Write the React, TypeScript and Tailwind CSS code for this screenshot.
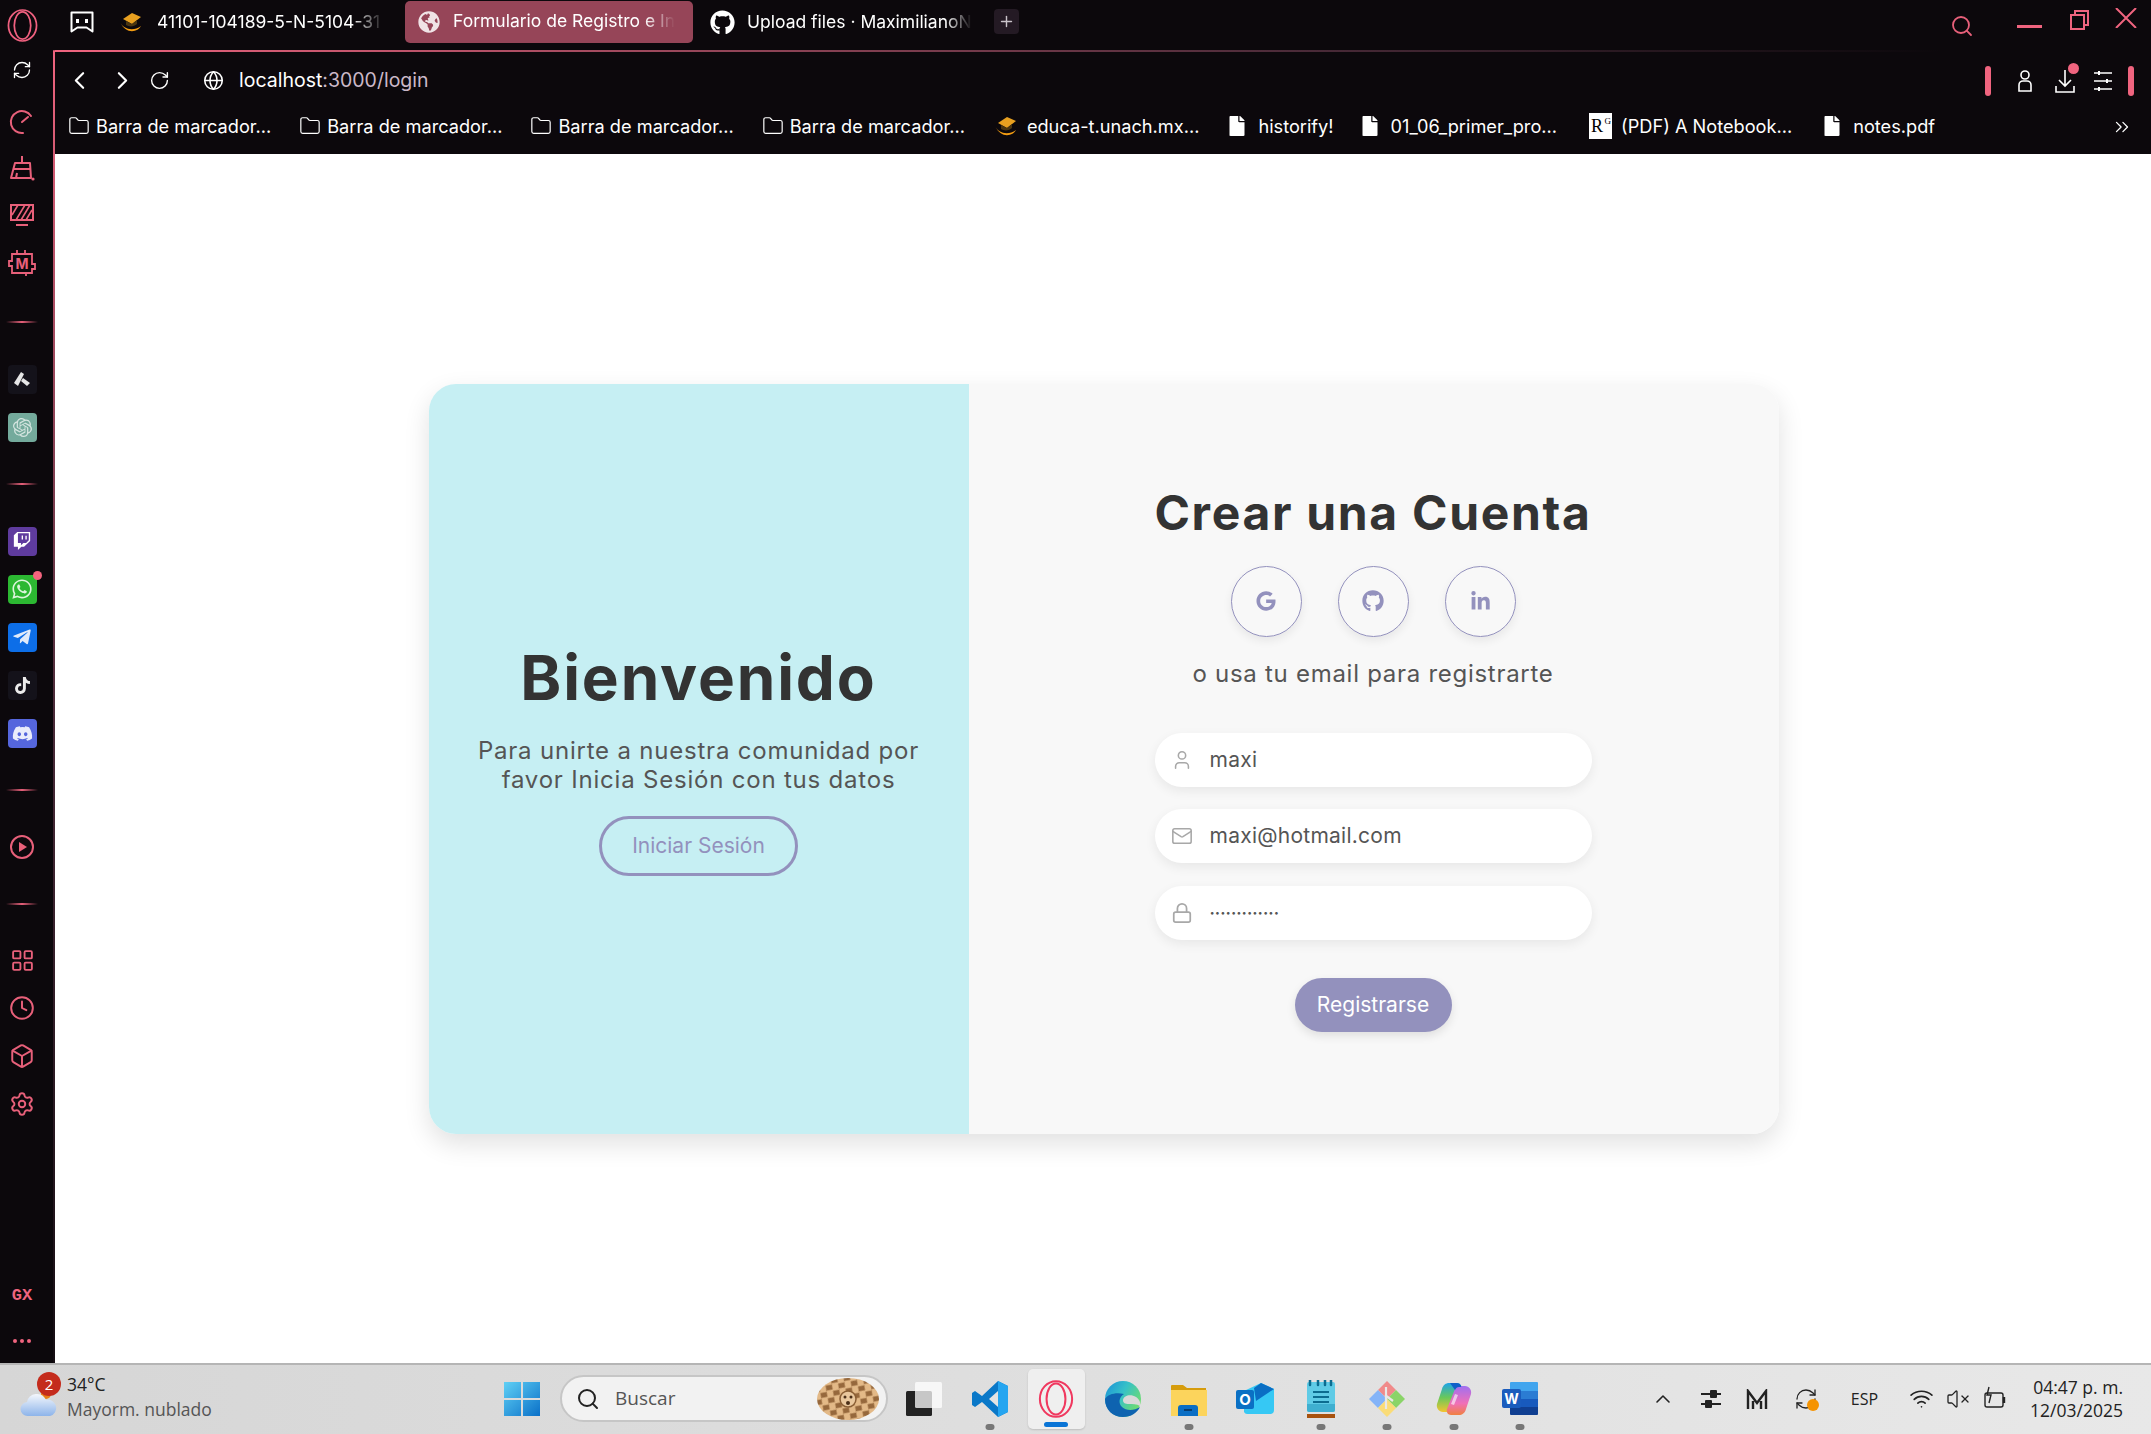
import type { ReactNode } from "react";
import { FaGithub, FaGoogle, FaLinkedinIn, FaWhatsapp, FaTelegramPlane, FaTiktok, FaDiscord, FaFile, FaGlobeAmericas, FaTwitch } from "react-icons/fa";
import { SiOpenai } from "react-icons/si";
import {
  ChevronLeft,
  ChevronRight,
  ChevronUp,
  ChevronsRight,
  Clock,
  Folder,
  Globe,
  LayoutGrid,
  Lock,
  Mail,
  Plus,
  RefreshCw,
  RotateCw,
  Search,
  Settings,
  Box,
  User,
  VolumeX,
  Wifi,
} from "lucide-react";

const OperaLogo = ({ size, color }: { size: number; color: string }) => (
  <svg width={size} height={size + 4} viewBox="0 0 32 36" fill="none" stroke={color} strokeWidth="1.8">
    <ellipse cx="16" cy="18" rx="14.5" ry="16" />
    <ellipse cx="16" cy="18" rx="8.5" ry="14" />
  </svg>
);

const CapIcon = () => (
  <svg width="24" height="22" viewBox="0 0 24 22">
    <path d="M1 11c3 7 13 10 21 4-3 6-15 9-21-4z" fill="#f39c12" />
    <path d="M4 8l9-6 9 4-9 7z" fill="#e8a020" />
    <path d="M7 10v4c3 2 8 2 11-1V9l-5 4z" fill="#4a3510" />
  </svg>
);

const SideItem = ({ className = "", children }: { className?: string; children: ReactNode }) => (
  <div className={`h-[48px] flex items-center justify-center shrink-0 ${className}`}>{children}</div>
);

const Tile = ({ className, children }: { className: string; children: ReactNode }) => (
  <div className={`relative w-[29px] h-[29px] rounded-[4px] flex items-center justify-center ${className}`}>{children}</div>
);

const SideDivider = ({ className }: { className: string }) => (
  <div className={`h-[2px] w-[32px] mx-auto shrink-0 bg-gradient-to-r from-transparent via-[#e8607a] to-transparent ${className}`} />
);

const Sidebar = () => (
  <div className="w-[53px] pr-[9px] shrink-0 flex flex-col text-[#e8607a]">
    <SideItem className="-mt-[4px]">
      <RefreshCw size={20} strokeWidth={1.6} className="text-white" />
    </SideItem>
    <SideItem className="mt-[4px]">
      <svg width="26" height="26" viewBox="0 0 26 26" fill="none" stroke="currentColor" strokeWidth="2" strokeLinecap="round">
        <path d="M22 7a11 11 0 1 0 -8 17" />
        <path d="M13 13l6-5" />
      </svg>
    </SideItem>
    <SideItem className="-mt-[2px]">
      <svg width="26" height="26" viewBox="0 0 26 26" fill="none" stroke="currentColor" strokeWidth="2">
        <path d="M13 1v7" />
        <path d="M6 8h15l1 15H2z" strokeLinejoin="round" />
        <path d="M5 14h17" />
        <path d="M7 23l1-5" />
        <circle cx="24" cy="24" r="1.6" fill="currentColor" stroke="none" />
      </svg>
    </SideItem>
    <SideItem className="-mt-[1px]">
      <svg width="26" height="24" viewBox="0 0 26 24" fill="none" stroke="currentColor" strokeWidth="2">
        <rect x="2" y="2" width="22" height="15" />
        <path d="M7 17l9-15M12 17l9-15M3 12l6-10M17 17l6-10" strokeWidth="1.6" />
        <path d="M7 22h12" />
      </svg>
    </SideItem>
    <SideItem>
      <div className="relative">
        <svg width="28" height="28" viewBox="0 0 28 28" fill="none" stroke="currentColor" strokeWidth="1.8">
          <path d="M4 5h20v10h3v5h-3v4H4v-7H1v-5h3z" />
          <path d="M9 1v4M17 1v4M18 24v3" />
        </svg>
        <span className="absolute inset-0 flex items-center justify-center text-[14px] font-bold font-['Inter',sans-serif]">M</span>
      </div>
    </SideItem>
    <SideDivider className="mt-[34px]" />
    <SideItem className="mt-[32px]">
      <Tile className="bg-[#14121a]">
        <svg width="18" height="16" viewBox="0 0 18 16" fill="#e6e6e6">
          <path d="M8 1l3 2-6 12-4-3z" />
          <path d="M10 7l7 5-3 3-6-5z" />
        </svg>
      </Tile>
    </SideItem>
    <SideItem>
      <Tile className="bg-[#74aa9c]">
        <SiOpenai size={19} className="text-[#d5e5e0]" />
      </Tile>
    </SideItem>
    <SideDivider className="mt-[32px]" />
    <SideItem className="mt-[32px]">
      <Tile className="bg-[#5f3b9e]">
        <FaTwitch size={18} className="text-white" />
      </Tile>
    </SideItem>
    <SideItem>
      <Tile className="bg-[#2cb832]">
        <FaWhatsapp size={22} className="text-[#dcf5dc]" />
        <span className="absolute -top-[4px] -right-[5px] w-[9px] h-[9px] rounded-full bg-[#f4647f]" />
      </Tile>
    </SideItem>
    <SideItem>
      <Tile className="bg-[#0d6ee8]">
        <FaTelegramPlane size={20} className="text-[#dfeafa]" />
      </Tile>
    </SideItem>
    <SideItem>
      <Tile className="bg-[#14121a]">
        <FaTiktok size={17} className="text-[#ececec]" />
      </Tile>
    </SideItem>
    <SideItem>
      <Tile className="bg-[#5566dd]">
        <FaDiscord size={21} className="text-[#e9ecfb]" />
      </Tile>
    </SideItem>
    <SideDivider className="mt-[32px]" />
    <SideItem className="mt-[32px]">
      <svg width="26" height="26" viewBox="0 0 26 26" fill="none" stroke="currentColor" strokeWidth="2">
        <circle cx="13" cy="13" r="11" />
        <path d="M10 8l8 5-8 5z" fill="currentColor" stroke="none" />
      </svg>
    </SideItem>
    <SideDivider className="mt-[32px]" />
    <SideItem className="mt-[31px]">
      <LayoutGrid size={25} strokeWidth={1.8} />
    </SideItem>
    <SideItem>
      <Clock size={26} strokeWidth={1.8} />
    </SideItem>
    <SideItem>
      <Box size={26} strokeWidth={1.8} />
    </SideItem>
    <SideItem>
      <Settings size={26} strokeWidth={1.8} />
    </SideItem>
    <div className="mt-auto h-[50px] flex items-center justify-center font-['Liberation_Mono',monospace] font-bold text-[17px] text-[#f0647f]">GX</div>
    <div className="h-[42px] pb-[3px] flex items-center justify-center gap-[3px]">
      <span className="w-[4px] h-[4px] rounded-full bg-[#f0647f]" />
      <span className="w-[4px] h-[4px] rounded-full bg-[#f0647f]" />
      <span className="w-[4px] h-[4px] rounded-full bg-[#f0647f]" />
    </div>
  </div>
);

const TabStrip = () => (
  <div className="h-[50px] shrink-0 flex items-center text-white text-[17.5px] font-['Inter',sans-serif]">
    <div className="w-[44px] flex justify-center">
      <OperaLogo size={31} color="#f0607f" />
    </div>
    <div className="ml-[26px] w-[24px] flex justify-center -mt-[6px]">
      <svg width="24" height="22" viewBox="0 0 24 22" fill="none">
        <path d="M1.5 1.5h21v19l-6-4h-9l-6 4z" stroke="white" strokeWidth="2" strokeLinejoin="round" />
        <rect x="6" y="8" width="3" height="4" fill="white" />
        <rect x="15" y="8" width="3" height="4" fill="white" />
      </svg>
    </div>
    <div className="ml-[25px] w-[280px] flex items-center gap-[14px] -mt-[6px]">
      <CapIcon />
      <span className="whitespace-nowrap overflow-hidden w-[232px] [mask-image:linear-gradient(to_right,black_84%,transparent_98%)]">41101-104189-5-N-5104-31</span>
    </div>
    <div className="ml-[6px] w-[288px] h-[42px] -mt-[7px] rounded-[5px] bg-[#964558] flex items-center pl-[13px] gap-[13px]">
      <FaGlobeAmericas size={22} className="text-[#f0e3e6] shrink-0" />
      <span className="whitespace-nowrap [mask-image:linear-gradient(to_right,black_86%,transparent_100%)]">Formulario de Registro e In</span>
    </div>
    <div className="ml-[17px] w-[273px] flex items-center gap-[12px] -mt-[6px] shrink-0">
      <FaGithub size={25} className="shrink-0" />
      <span className="whitespace-nowrap [mask-image:linear-gradient(to_right,black_88%,transparent_100%)]">Upload files · MaximilianoN</span>
    </div>
    <div className="ml-[11px] w-[25px] h-[25px] -mt-[7px] rounded-[4px] bg-[#241a24] flex items-center justify-center">
      <Plus size={17} className="text-[#c9c3c9]" />
    </div>
    <Search size={24} strokeWidth={1.8} className="ml-[931px] mt-[2px] text-[#e8607a]" />
    <div className="ml-[43px] w-[25px] h-[2.5px] mt-[3px] bg-[#f0647f]" />
    <svg width="19" height="20" viewBox="0 0 19 20" fill="none" stroke="#f0647f" strokeWidth="2" className="ml-[28px] -mt-[10px]">
      <rect x="1" y="5" width="13" height="14" />
      <path d="M5 5V1h13v14h-4" />
    </svg>
    <svg width="22" height="20" viewBox="0 0 22 20" fill="none" stroke="#f0647f" strokeWidth="2" className="ml-[26px] -mt-[14px]">
      <path d="M1 0l20 20M21 0L1 20" />
    </svg>
  </div>
);

const Bookmark = ({ icon, label, className }: { icon: ReactNode; label: string; className: string }) => (
  <div className={`flex items-center gap-[6px] shrink-0 ${className}`}>
    {icon}
    <span className="whitespace-nowrap">{label}</span>
  </div>
);

const folder = <Folder size={22} strokeWidth={1.3} className="text-white" />;
const doc = <FaFile size={20} className="text-white mr-[5px] ml-[1px]" />;

const Toolbar = () => (
  <div className="h-[102px] bg-[#0c080c] text-white font-['Inter',sans-serif]">
    <div className="h-[57px] flex items-center">
      <ChevronLeft size={29} strokeWidth={1.8} className="ml-[10px]" />
      <ChevronRight size={29} strokeWidth={1.8} className="ml-[14px]" />
      <RotateCw size={21} strokeWidth={1.6} className="ml-[12px]" />
      <Globe size={21} strokeWidth={1.8} className="ml-[33px]" />
      <span className="ml-[15px] text-[19.5px]">
        localhost<span className="text-[#cbb8c8]">:3000/login</span>
      </span>
      <div className="ml-auto mr-[17px] flex items-center">
        <div className="w-[6px] h-[30px] rounded-full bg-[#f0647f]" />
        <svg width="20" height="24" viewBox="0 0 20 24" fill="none" stroke="white" strokeWidth="1.6" className="ml-[24px]">
          <circle cx="10" cy="6" r="4" />
          <path d="M4 22v-6a4 4 0 0 1 4-4h4a4 4 0 0 1 4 4v6z" />
        </svg>
        <div className="relative ml-[19px]">
          <svg width="22" height="26" viewBox="0 0 22 26" fill="none" stroke="white" strokeWidth="1.6">
            <path d="M11 2v16M5 12l6 6 6-6M2 18v6h18v-6" />
          </svg>
          <span className="absolute -top-[5px] -right-[3px] w-[11px] h-[11px] rounded-full bg-[#f0647f]" />
        </div>
        <svg width="20" height="22" viewBox="0 0 20 22" fill="none" stroke="white" strokeWidth="1.6" className="ml-[17px]">
          <path d="M1 3h18M1 11h18M1 19h18" />
          <path d="M6 1v4M14 9v4M6 17v4" strokeWidth="2" />
        </svg>
        <div className="ml-[15px] w-[6px] h-[30px] rounded-full bg-[#f0647f]" />
      </div>
    </div>
    <div className="h-[45px] -mt-[5px] flex items-center text-[18.2px]">
      <Bookmark className="ml-[13px]" icon={folder} label="Barra de marcador..." />
      <Bookmark className="ml-[28px]" icon={folder} label="Barra de marcador..." />
      <Bookmark className="ml-[28px]" icon={folder} label="Barra de marcador..." />
      <Bookmark className="ml-[28px]" icon={folder} label="Barra de marcador..." />
      <Bookmark className="ml-[29px]" icon={<span className="mr-[3px]"><CapIcon /></span>} label="educa-t.unach.mx..." />
      <Bookmark className="ml-[27px]" icon={doc} label="historify!" />
      <Bookmark className="ml-[25px]" icon={doc} label="01_06_primer_pro..." />
      <Bookmark
        className="ml-[32px]"
        icon={
          <span className="w-[23px] h-[26px] mr-[3px] bg-white text-black font-['Liberation_Serif',serif] text-[18px] leading-[26px] pl-[2px] relative">
            R<span className="absolute top-[-5px] right-[1px] text-[9px]">G</span>
          </span>
        }
        label="(PDF) A Notebook..."
      />
      <Bookmark className="ml-[29px]" icon={doc} label="notes.pdf" />
      <ChevronsRight size={22} strokeWidth={1.4} className="ml-auto mr-[18px]" />
    </div>
  </div>
);

const Field = ({ icon, value, className = "" }: { icon: ReactNode; value: string; className?: string }) => (
  <div className="h-[54px] rounded-full bg-white shadow-[0_4px_12px_rgba(0,0,0,0.07)] flex items-center pl-[16px]">
    {icon}
    <input readOnly value={value} className={`ml-[17px] flex-1 min-w-0 bg-transparent outline-none text-[#555] ${className}`} />
  </div>
);

const Social = ({ children }: { children: ReactNode }) => (
  <div className="w-[71px] h-[71px] rounded-full border border-[#9391bd] text-[#9391bd] shadow-[0_4px_10px_rgba(0,0,0,0.07)] flex items-center justify-center">
    {children}
  </div>
);

const LoginCard = () => (
  <div className="w-[1350px] h-[750px] rounded-[27px] overflow-hidden flex shadow-[0_10px_26px_rgba(0,0,0,0.12)] font-['Inter',sans-serif]">
    <div className="w-[540px] bg-[#c6eff3] flex flex-col items-center justify-center pb-[3px] pr-[1px]">
      <h1 className="text-[62px] leading-[78px] font-bold text-[#333] tracking-[0.03em]">Bienvenido</h1>
      <p className="mt-[19px] text-[24px] leading-[29px] text-[#555] text-center tracking-[0.033em] w-[480px]">
        Para unirte a nuestra comunidad por favor Inicia Sesión con tus datos
      </p>
      <div className="mt-[22px] w-[199px] h-[60px] rounded-full border-[3px] border-[#9391bd] text-[#9391bd] text-[21px] flex items-center justify-center">
        Iniciar Sesión
      </div>
    </div>
    <div className="w-[810px] bg-[#f8f8f8] flex flex-col items-center pt-[100px] pr-[2px]">
      <h2 className="text-[48px] leading-[58px] font-bold text-[#333] tracking-[0.035em]">Crear una Cuenta</h2>
      <div className="mt-[24px] flex gap-[36px]">
        <Social>
          <FaGoogle size={20} />
        </Social>
        <Social>
          <FaGithub size={22} />
        </Social>
        <Social>
          <FaLinkedinIn size={21} />
        </Social>
      </div>
      <p className="mt-[22px] text-[24px] leading-[30px] text-[#555] tracking-[0.03em]">o usa tu email para registrarte</p>
      <div className="mt-[44px] w-[437px] flex flex-col gap-[22.5px]">
        <Field icon={<User size={22} strokeWidth={1.7} className="text-[#a8a8a8]" />} value="maxi" className="text-[21px] tracking-[0.012em]" />
        <Field icon={<Mail size={22} strokeWidth={1.7} className="text-[#a8a8a8]" />} value="maxi@hotmail.com" className="text-[21px] tracking-[0.012em]" />
        <Field
          icon={<Lock size={22} strokeWidth={1.9} className="text-[#a8a8a8]" />}
          value="·············"
          className="text-[16px] font-bold text-[#333]"
        />
      </div>
      <div className="mt-[38px] w-[157px] h-[54px] rounded-full bg-[#9391bd] text-white text-[21px] shadow-[0_4px_10px_rgba(0,0,0,0.1)] flex items-center justify-center">
        Registrarse
      </div>
    </div>
  </div>
);

const TaskSlot = ({ children, dot, active }: { children: ReactNode; dot?: boolean; active?: boolean }) => (
  <div className="relative w-[66.2px] h-[56px] flex items-center justify-center shrink-0">
    {active && <span className="absolute -top-[2px] -bottom-[2px] inset-x-[5px] rounded-[5px] bg-[#efefef] shadow-[0_1px_2px_rgba(0,0,0,0.15)]" />}
    <span className="relative flex">{children}</span>
    {dot && <span className="absolute bottom-[-3px] left-1/2 -translate-x-1/2 w-[9px] h-[6px] rounded-full bg-[#777]" />}
    {active && <span className="absolute bottom-[0px] left-1/2 -translate-x-1/2 w-[24px] h-[5px] rounded-full bg-[#0a74d6]" />}
  </div>
);

const Taskbar = () => (
  <div className="h-[71px] pb-[2px] shrink-0 border-t-2 border-[#b5b5b5] bg-gradient-to-r from-[#d6d6d6] to-[#e8e8e8] flex items-center font-['Open_Sans',sans-serif] text-[#222]">
    <div className="relative w-[504px] shrink-0 h-full flex items-center">
      <svg width="38" height="30" viewBox="0 0 38 30" className="ml-[20px] mt-[8px]">
        <defs>
          <linearGradient id="cloud" x1="0" y1="0" x2="0" y2="1">
            <stop offset="0" stopColor="#f4f7fc" />
            <stop offset="1" stopColor="#8db4ea" />
          </linearGradient>
        </defs>
        <circle cx="26" cy="6" r="5" fill="#e8801a" />
        <path d="M8 28a7 7 0 0 1-1-14 10 10 0 0 1 19-2 8 8 0 0 1 4 16z" fill="url(#cloud)" />
      </svg>
      <span className="absolute left-[37px] top-[7px] w-[24px] h-[24px] rounded-full bg-[#c42b1c] text-white text-[15px] flex items-center justify-center">2</span>
      <div className="ml-[9px] text-[17.5px] leading-[25px] -mt-[3px]">
        <div>34°C</div>
        <div className="text-[#555]">Mayorm. nublado</div>
      </div>
    </div>
    <svg width="36" height="36" viewBox="0 0 36 36" className="shrink-0">
      <defs>
        <linearGradient id="win" x1="0" y1="0" x2="1" y2="1">
          <stop offset="0" stopColor="#5fd0f5" />
          <stop offset="1" stopColor="#0a70c8" />
        </linearGradient>
      </defs>
      <path d="M0 1h17v16H0zM19 1h17v16H19zM0 19h17v16H0zM19 19h17v16H19z" fill="url(#win)" />
    </svg>
    <div className="ml-[20px] w-[328px] h-[47px] rounded-full bg-[#f2f2f2] border-2 border-[#c6c6c6] flex items-center pl-[14px] shrink-0">
      <Search size={24} strokeWidth={2} className="text-[#222]" />
      <span className="ml-[15px] text-[19px] text-[#555]">Buscar</span>
      <svg width="62" height="42" viewBox="0 0 62 42" className="ml-auto mr-[7px]">
        <defs>
          <pattern id="tiles" width="9" height="9" patternUnits="userSpaceOnUse" patternTransform="rotate(35 31 21)">
            <rect width="9" height="9" fill="#e3b987" />
            <path d="M0 0l4 4-4 4zM9 9l-4-4 4-4z" fill="#96683c" />
          </pattern>
        </defs>
        <ellipse cx="31" cy="21" rx="31" ry="21" fill="url(#tiles)" />
        <circle cx="31" cy="21" r="8" fill="#e9c79d" stroke="#8a5e34" strokeWidth="1.5" />
        <circle cx="28" cy="19" r="1.5" fill="#4b2f18" />
        <circle cx="34" cy="19" r="1.5" fill="#4b2f18" />
        <circle cx="31" cy="25" r="2" fill="#4b2f18" />
      </svg>
    </div>
    <div className="ml-[3px] flex items-center">
      <TaskSlot>
        <svg width="36" height="36" viewBox="0 0 36 36">
          <rect x="0" y="10" width="26" height="25" rx="1.5" fill="#222" />
          <rect x="9" y="1" width="27" height="26" rx="1.5" fill="#fff" opacity="0.75" />
        </svg>
      </TaskSlot>
      <TaskSlot dot>
        <svg width="38" height="38" viewBox="0 0 38 38">
          <path d="M27 1l10 5v26l-10 5-16-15-7 5-3-2v-12l3-2 7 5z" fill="#0a78c8" />
          <path d="M27 1l10 5v26l-10 5z" fill="#25a5f0" />
          <path d="M27 11l-9 8 9 8z" fill="#e3e3e3" />
        </svg>
      </TaskSlot>
      <TaskSlot active>
        <OperaLogo size={36} color="#f0385f" />
      </TaskSlot>
      <TaskSlot>
        <svg width="38" height="38" viewBox="0 0 38 38">
          <defs>
            <linearGradient id="edge" x1="0" y1="0" x2="1" y2="0.6">
              <stop offset="0" stopColor="#1a8fd8" />
              <stop offset="0.5" stopColor="#35c1c8" />
              <stop offset="1" stopColor="#6fdc6f" />
            </linearGradient>
          </defs>
          <circle cx="19" cy="19" r="18" fill="url(#edge)" />
          <path d="M1 19C1 30 9 37 19 37c8 0 14-4 17-10-6 4-14 4-18 0-4-4-3-10 2-13C12 12 4 14 1 19z" fill="#0e63b0" />
          <path d="M19 20c1-5 8-6 13-3 3 2 5 5 4 9-3-2-8-2-11-2-4 0-6-1-6-4z" fill="#d9d9d9" />
        </svg>
      </TaskSlot>
      <TaskSlot dot>
        <svg width="36" height="34" viewBox="0 0 36 34">
          <path d="M0 4a1 1 0 0 1 1-1h11l4 3h19v4H0z" fill="#d69c0c" />
          <path d="M0 8h36v26H0z" fill="#fcd45c" />
          <path d="M7 34v-8a3 3 0 0 1 3-3h14a3 3 0 0 1 3 3v8z" fill="#0a6ec4" />
          <path d="M13 28h8" stroke="#073d70" strokeWidth="2" />
        </svg>
      </TaskSlot>
      <TaskSlot>
        <svg width="38" height="32" viewBox="0 0 38 32">
          <path d="M8 8L25 0l13 6v21a4 4 0 0 1-4 4H11a4 4 0 0 1-3-2z" fill="#36c8f4" />
          <path d="M18 5l7-5 13 6-18 12z" fill="#0a6ec4" />
          <rect x="0" y="7" width="18" height="19" rx="2" fill="#0a70c4" />
          <text x="9" y="22" textAnchor="middle" fontSize="15" fontWeight="700" fill="#fff" fontFamily="Inter, sans-serif">O</text>
        </svg>
      </TaskSlot>
      <TaskSlot dot>
        <svg width="28" height="38" viewBox="0 0 28 38">
          <rect x="0" y="2" width="28" height="30" rx="2" fill="#5fcbe6" />
          <path d="M0 24h28v6a2 2 0 0 1-2 2H2a2 2 0 0 1-2-2z" fill="#3fafd0" />
          <path d="M6 12h16M6 17h16M6 22h16" stroke="#0c6c90" strokeWidth="1.8" />
          <path d="M3 0v5M11 0v5M18 0v5M24 0v5" stroke="#0c6c90" strokeWidth="2.5" strokeLinecap="round" />
          <rect x="0" y="34" width="28" height="4" fill="#a8520e" />
        </svg>
      </TaskSlot>
      <TaskSlot dot>
        <svg width="36" height="36" viewBox="0 0 36 36">
          <path d="M9 9l9-9 9 9-9 9z" fill="#f08a8a" />
          <path d="M0 18l9-9 9 9-9 9z" fill="#84b4f8" />
          <path d="M18 18l9-9 9 9-9 9z" fill="#8ad468" />
          <path d="M9 27l9-9 9 9-9 9z" fill="#fadc78" />
          <path d="M17 6v22M16 14l8 6" stroke="#e8e8e8" strokeWidth="2.2" />
        </svg>
      </TaskSlot>
      <TaskSlot dot>
        <svg width="36" height="34" viewBox="0 0 36 34">
          <defs>
            <linearGradient id="cop1" x1="0" y1="0" x2="0" y2="1">
              <stop offset="0" stopColor="#1ea4e8" />
              <stop offset="0.5" stopColor="#6ac85a" />
              <stop offset="1" stopColor="#f4c430" />
            </linearGradient>
            <linearGradient id="cop2" x1="0" y1="0" x2="0" y2="1">
              <stop offset="0" stopColor="#a070f0" />
              <stop offset="0.6" stopColor="#f070b8" />
              <stop offset="1" stopColor="#f08040" />
            </linearGradient>
          </defs>
          <path d="M13 1h8c3 0 5 3 4 6l-8 20c-1 2-3 3-5 3H7c-4 0-7-4-6-8L6 7c1-4 4-6 7-6z" fill="url(#cop1)" />
          <path d="M23 33h-8c-3 0-5-3-4-6l8-20c1-2 3-3 5-3h5c4 0 7 4 6 8l-5 15c-1 4-4 6-7 6z" fill="url(#cop2)" />
          <path d="M14 1h7c3 0 5 3 4 4h-2c-2 0-3 1-4 3z" fill="#1060c8" />
          <path d="M15 22l4-10 3 1-4 10z" fill="#fff" opacity="0.6" />
        </svg>
      </TaskSlot>
      <TaskSlot dot>
        <svg width="36" height="33" viewBox="0 0 36 33">
          <path d="M8 1a1 1 0 0 1 1-1h26a1 1 0 0 1 1 1v8H8z" fill="#41a5ee" />
          <rect x="8" y="9" width="28" height="8" fill="#2b7cd3" />
          <rect x="8" y="17" width="28" height="8" fill="#185abd" />
          <path d="M8 25h28v7a1 1 0 0 1-1 1H9a1 1 0 0 1-1-1z" fill="#103f91" />
          <rect x="0" y="7" width="19" height="19" rx="2" fill="#1a5cbd" />
          <text x="9.5" y="22" textAnchor="middle" fontSize="14" fontWeight="700" fill="#fff" fontFamily="Inter, sans-serif">W</text>
        </svg>
      </TaskSlot>
    </div>
    <div className="ml-auto mr-[28px] flex items-center">
      <ChevronUp size={24} strokeWidth={1.6} />
      <svg width="22" height="22" viewBox="0 0 22 22" className="ml-[25px]" fill="#222">
        <path d="M1 5h20v2H1zM1 15h20v2H1z" />
        <rect x="10" y="2" width="7" height="8" rx="1" />
        <rect x="5" y="12" width="7" height="8" rx="1" />
      </svg>
      <svg width="22" height="20" viewBox="0 0 22 20" fill="none" stroke="#222" strokeWidth="2.4" className="ml-[24px]">
        <path d="M2 20V2l9 12 9-12v18M7 12v8M15 12v8" />
      </svg>
      <div className="relative ml-[26px] w-[24px] h-[30px] flex items-center justify-center">
        <RefreshCw size={26} strokeWidth={1.3} />
        <span className="absolute right-[-1px] bottom-[3px] w-[12px] h-[12px] rounded-full bg-[#f59300]" />
      </div>
      <span className="ml-[33px] text-[16px]">ESP</span>
      <Wifi size={25} strokeWidth={1.6} className="ml-[31px]" />
      <VolumeX size={24} strokeWidth={1.3} className="ml-[12px]" />
      <svg width="24" height="28" viewBox="0 0 24 28" fill="none" stroke="#222" strokeWidth="1.4" className="ml-[12px]">
        <path d="M5 8h14a2 2 0 0 1 2 2v10a2 2 0 0 1-2 2H5a2 2 0 0 1-2-2V10a2 2 0 0 1 2-2z" />
        <path d="M22 12v6" strokeWidth="2.4" />
        <path d="M7 2l-2 8h4l-2 8" />
      </svg>
      <div className="ml-[24px] text-right text-[17.5px] leading-[23px]">
        <div>04:47 p. m.</div>
        <div>12/03/2025</div>
      </div>
    </div>
  </div>
);

export default function App() {
  return (
    <div className="w-[2151px] h-[1434px] overflow-hidden flex flex-col bg-[#0c080c]">
      <TabStrip />
      <div className="flex-1 min-h-0 flex">
        <Sidebar />
        <div className="w-[2px] shrink-0 rounded-t-[4px] bg-gradient-to-b from-[#f0647f] via-[#4a2a38] via-50% to-[#150d13]" />
        <div className="flex-1 min-w-0 flex flex-col">
          <div className="h-[2px] shrink-0 bg-gradient-to-r from-[#f0647f] via-[#4a2a38] via-60% to-[#0c080c] to-90%" />
          <Toolbar />
          <div className="flex-1 min-h-0 bg-white flex items-center justify-center pl-[2px]">
            <LoginCard />
          </div>
        </div>
      </div>
      <Taskbar />
    </div>
  );
}
